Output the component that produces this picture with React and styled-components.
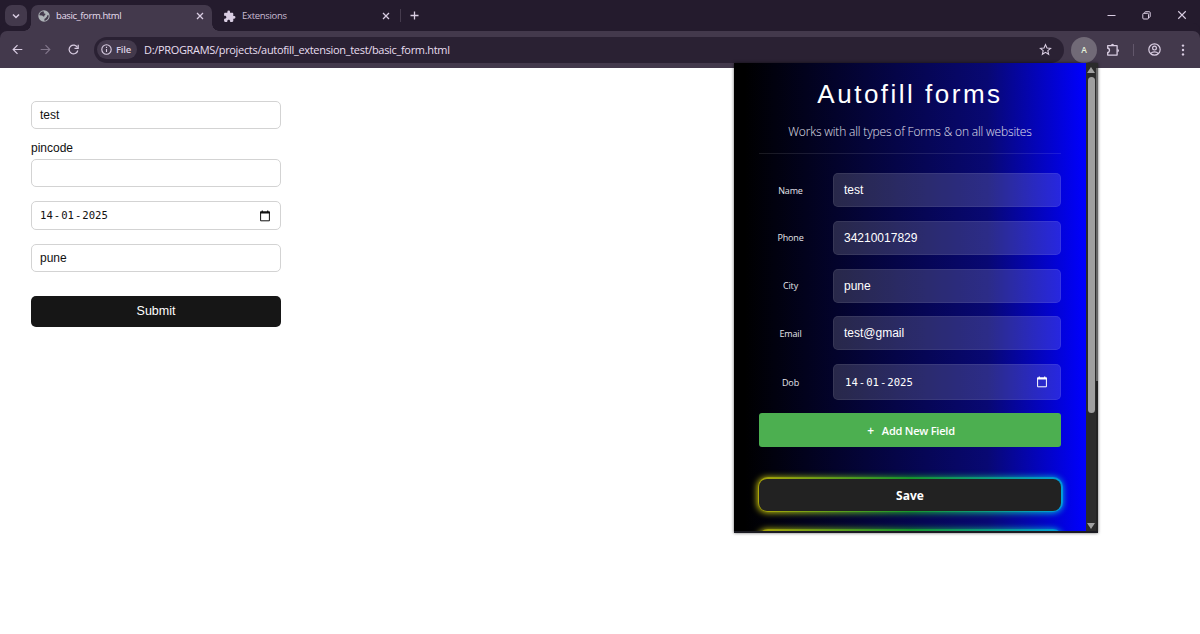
import styled, {createGlobalStyle} from 'styled-components';

const formFields = [
  {id: 'name', value: 'test', height: 28, gap: 11},
  {id: 'pincode', label: 'pincode', value: '', height: 28, gap: 14},
  {id: 'dob', date: ['14', '01', '2025'], height: 29, gap: 14},
  {id: 'city', value: 'pune', height: 28, gap: 24},
];

const popupFields = [
  {label: 'Name', value: 'test'},
  {label: 'Phone', value: '34210017829'},
  {label: 'City', value: 'pune'},
  {label: 'Email', value: 'test@gmail'},
  {label: 'Dob', date: ['14', '01', '2025']},
];

const Icon = ({size = 12, box = 24, stroke = 2, fill = 'none', children}) => (
  <svg
    width={size}
    height={size}
    viewBox={`0 0 ${box} ${box}`}
    fill={fill}
    stroke={fill === 'none' ? 'currentColor' : 'none'}
    strokeWidth={stroke}
  >
    {children}
  </svg>
);

const CloseIcon = ({size = 8, stroke = 1.3}) => (
  <Icon size={size} box={8} stroke={stroke}>
    <path d="M1 1l6 6M7 1L1 7" />
  </Icon>
);

const GlobeIcon = () => (
  <Icon size={12} box={12} fill="#aeb3b8">
    <circle cx="6" cy="6" r="5.7" />
    <path
      fill="#43394c"
      d="M5.2 1.3C3 1.6 1.5 3.3 1.3 5.3l2.7.1c1 .1 1 1.2 1.8 1.2 1 0 .3-1.5 1.3-1.9 1-.3.4-1.2-.5-1.1-1 .1-1.3-1.1-.3-1.3zM10.7 5.4c-.8-.5-1.9.1-1.7.8.2.8-.9.9-1.1 1.6-.2.8-1.5.7-1.5 1.6v1.300c2.400-.2 4.400-2.300 4.300-5.300z"
    />
  </Icon>
);

const PuzzleFilledIcon = () => (
  <Icon size={13} box={24} fill="#d9cde2">
    <path d="M20.5 11H19V7c0-1.1-.9-2-2-2h-4V3.500a2.500 2.500 0 0 0-5 0V5H4c-1.100 0-1.990.9-1.990 2v3.800H3.500c1.490 0 2.700 1.210 2.700 2.700s-1.210 2.700-2.700 2.700H2V20c0 1.100.9 2 2 2h3.800v-1.500c0-1.490 1.210-2.700 2.700-2.700s2.700 1.210 2.700 2.700V22H17c1.100 0 2-.9 2-2v-4h1.500a2.500 2.500 0 0 0 0-5z" />
  </Icon>
);

const PuzzleIcon = () => (
  <Icon size={14} box={14} stroke={1.3}>
    <path d="M1.700 5V2.700h9.400v9.400H1.700V9.700M1.100 9.700c3.200 0 3.200-4.700 0-4.700" strokeLinejoin="round" />
    <path d="M5 2.300a1.500 1.500 0 0 1 3 0zM11.500 5.900a1.500 1.500 0 0 1 0 3z" fill="currentColor" stroke="none" />
  </Icon>
);

const CalendarIcon = () => (
  <Icon size={12} box={12} stroke={1}>
    <path d="M1.600 2h8.800v8.800H1.600z" />
    <path d="M1.100 1.500h9.800v1.900H1.100zM2.700.6h1.200v1.400H2.700zM8.100.6h1.200v1.400H8.100z" fill="currentColor" stroke="none" />
  </Icon>
);

const DateValue = ({parts}) => (
  <>
    <StyledDate>
      {parts[0]}
      <i>-</i>
      {parts[1]}
      <i>-</i>
      {parts[2]}
    </StyledDate>
    <CalendarIcon />
  </>
);

const TabBar = () => (
  <StyledTabBar>
    <StyledTabSearch>
      <Icon size={8} box={8} stroke={1.5}>
        <path d="M1 2.500l3 3 3-3" />
      </Icon>
    </StyledTabSearch>
    <StyledTab $active>
      <GlobeIcon />
      <StyledTabTitle $active>basic_form.html</StyledTabTitle>
      <CloseIcon />
    </StyledTab>
    <StyledTab>
      <PuzzleFilledIcon />
      <StyledTabTitle>Extensions</StyledTabTitle>
      <CloseIcon />
    </StyledTab>
    <StyledNewTab>
      <Icon size={9} box={9} stroke={1.3}>
        <path d="M4.500 .5v8M.5 4.500h8" />
      </Icon>
    </StyledNewTab>
    <StyledWindowButtons>
      <Icon size={9} box={9} stroke={1}>
        <path d="M.5 4.500h8" />
      </Icon>
      <Icon size={9} box={9} stroke={1}>
        <rect x=".8" y="2.300" width="5.700" height="5.700" rx="1" />
        <path d="M2.700 2.200V1.500q0-.8.8-.8h3.700q1 0 1 1v3.800q0 .8-.9.8h-.7" />
      </Icon>
      <CloseIcon size={10} stroke={0.9} />
    </StyledWindowButtons>
  </StyledTabBar>
);

const Toolbar = () => (
  <StyledToolbar>
    <StyledNavButtons>
      <Icon size={11} box={11} stroke={1.2}>
        <path d="M10.300 5.500H1.300M5.500 1.200L1.200 5.500l4.300 4.300" />
      </Icon>
      <StyledDisabled>
        <Icon size={11} box={11} stroke={1.2}>
          <path d="M.7 5.500h9M5.500 1.200l4.300 4.300-4.300 4.300" />
        </Icon>
      </StyledDisabled>
      <Icon size={11} box={11} stroke={1.2}>
        <path d="M9.500 3.600A4.400 4.400 0 1 0 9.800 6.500" />
        <path d="M10.200 .7v3.700H6.500" />
      </Icon>
    </StyledNavButtons>
    <StyledOmnibox>
      <StyledFileChip>
        <Icon size={11} box={11} stroke={1.1}>
          <circle cx="5.500" cy="5.500" r="4.700" />
          <path d="M5.500 4.900v3.200M5.500 2.800v1.200" />
        </Icon>
        File
      </StyledFileChip>
      <StyledUrl>D:/PROGRAMS/projects/autofill_extension_test/basic_form.html</StyledUrl>
      <Icon size={13} box={24} stroke={2}>
        <path d="M12 3l2.700 6.200 6.700.6-5.100 4.400 1.500 6.600L12 17.300l-5.800 3.500 1.500-6.600-5.100-4.400 6.700-.6z" />
      </Icon>
    </StyledOmnibox>
    <StyledExtensionBadge>A</StyledExtensionBadge>
    <PuzzleIcon />
    <StyledDivider />
    <StyledProfile>
      <Icon size={13} box={13} stroke={1.2}>
        <circle cx="6.500" cy="6.500" r="5.700" />
        <circle cx="6.500" cy="5.100" r="1.900" />
        <path d="M2.700 10.500c1.800-2.300 5.800-2.300 7.600 0" />
      </Icon>
    </StyledProfile>
    <Icon size={12} box={12} fill="#d9cde2">
      <circle cx="6" cy="1.600" r="1.200" />
      <circle cx="6" cy="6" r="1.200" />
      <circle cx="6" cy="10.400" r="1.200" />
    </Icon>
  </StyledToolbar>
);

const PageForm = () => (
  <StyledForm>
    {formFields.map(field => (
      <StyledFormRow key={field.id} $gap={field.gap}>
        {field.label ? <StyledFormLabel>{field.label}</StyledFormLabel> : ''}
        <StyledFormInput $height={field.height}>
          {field.date ? <DateValue parts={field.date} /> : field.value}
        </StyledFormInput>
      </StyledFormRow>
    ))}
    <StyledSubmit>Submit</StyledSubmit>
  </StyledForm>
);

const Popup = () => (
  <StyledPopup>
    <StyledPopupBody>
      <StyledTitle>Autofill forms</StyledTitle>
      <StyledSubtitle>Works with all types of Forms &amp; on all websites</StyledSubtitle>
      <StyledFieldList>
        {popupFields.map(field => (
          <StyledFieldRow key={field.label}>
            <StyledFieldLabel>{field.label}</StyledFieldLabel>
            <StyledFieldInput $date={!!field.date}>
              {field.date ? <DateValue parts={field.date} /> : field.value}
            </StyledFieldInput>
          </StyledFieldRow>
        ))}
      </StyledFieldList>
      <StyledAddField>
        <span>+</span>Add New Field
      </StyledAddField>
      <StyledGlowButton>
        <span>Save</span>
      </StyledGlowButton>
      <StyledGlowButton />
    </StyledPopupBody>
    <StyledScrollbar>
      <StyledArrow />
      <StyledThumb />
      <StyledArrow $down />
    </StyledScrollbar>
    <StyledOuterScroll />
  </StyledPopup>
);

export default function App() {
  return (
    <StyledWindow>
      <GlobalStyle />
      <TabBar />
      <Toolbar />
      <PageForm />
      <Popup />
    </StyledWindow>
  );
}

const GlobalStyle = createGlobalStyle`
  * {
    box-sizing: border-box;
  }

  body {
    margin: 0;
    background: #fff;
    overflow: hidden;
  }

  svg {
    display: block;
    flex-shrink: 0;
  }
`;

const StyledWindow = styled.div`
  position: relative;
  height: 634px;
  overflow: hidden;
  background-color: #fff;
  font-family: 'Open Sans', 'Noto Sans', sans-serif;
`;

const StyledTabBar = styled.header`
  display: flex;
  height: 31px;
  background-color: #241b2d;
  color: #d9cde2;
`;

const StyledTabSearch = styled.div`
  display: flex;
  align-items: center;
  justify-content: center;
  width: 22px;
  height: 21px;
  margin: 5px 4px 0 5px;
  border-radius: 7px;
  background-color: #43394c;
`;

const StyledTab = styled.div`
  position: relative;
  display: flex;
  align-items: center;
  width: ${props => (props.$active ? '181px' : '188px')};
  height: ${props => (props.$active ? '27px' : '22px')};
  margin-top: 5px;
  padding: ${props => (props.$active ? '0 8px 5px 7px' : '0 10px 0 11px')};
  border-radius: 7px 7px 0 0;
  background-color: ${props => (props.$active ? '#43394c' : 'transparent')};
  ${props =>
    props.$active
      ? `
    &::before,
    &::after {
      content: '';
      position: absolute;
      bottom: 1px;
      width: 7px;
      height: 7px;
    }
    &::before {
      left: -7px;
      background: radial-gradient(circle at 0 0, transparent 6.5px, #43394c 7px);
    }
    &::after {
      right: -7px;
      background: radial-gradient(circle at 100% 0, transparent 6.5px, #43394c 7px);
    }`
      : ''}
`;

const StyledTabTitle = styled.span`
  flex: 1;
  margin-left: 6px;
  color: ${props => (props.$active ? '#e8dff0' : '#c9bcd3')};
  font-size: 9.5px;
  line-height: 14px;
  letter-spacing: ${props => (props.$active ? '-0.4px' : '-0.3px')};
`;

const StyledNewTab = styled.div`
  display: flex;
  align-items: center;
  height: 13px;
  margin-top: 9px;
  padding-left: 9px;
  border-left: 1px solid #453b4d;
`;

const StyledWindowButtons = styled.div`
  display: flex;
  align-items: center;
  gap: 26px;
  height: 30px;
  margin-left: auto;
  padding-right: 13px;
`;

const StyledToolbar = styled.nav`
  display: flex;
  align-items: center;
  height: 37px;
  padding: 0 11px 0 12px;
  border-radius: 7px 7px 0 0;
  background-color: #43394c;
  box-shadow: 0 -8px 0 #241b2d;
  color: #d9cde2;
`;

const StyledNavButtons = styled.div`
  display: flex;
  gap: 17px;
  width: 82px;
`;

const StyledDisabled = styled.span`
  color: #81768a;
`;

const StyledOmnibox = styled.div`
  display: flex;
  align-items: center;
  width: 970px;
  height: 26px;
  padding: 0 12px 0 3px;
  border-radius: 13px;
  background-color: #2a2133;
`;

const StyledFileChip = styled.div`
  display: flex;
  align-items: center;
  gap: 4px;
  width: 40px;
  height: 19px;
  padding-left: 4px;
  border-radius: 10px;
  background-color: #43394c;
  font-size: 9.5px;
  font-weight: 600;
  letter-spacing: -0.2px;
`;

const StyledUrl = styled.span`
  flex: 1;
  margin-left: 7px;
  color: #e8dff0;
  font-size: 11px;
  letter-spacing: -0.32px;
`;

const StyledExtensionBadge = styled.div`
  display: flex;
  align-items: center;
  justify-content: center;
  width: 26px;
  height: 26px;
  margin: 0 9px 0 7px;
  border-radius: 50%;
  background-color: #716a77;
  color: #e6f3dc;
  font-size: 8.5px;
  font-weight: 600;
`;

const StyledDivider = styled.div`
  width: 1px;
  height: 12px;
  margin: 0 14px 0 13px;
  background-color: #62576b;
`;

const StyledProfile = styled.div`
  margin-right: 16px;
`;

const StyledForm = styled.form`
  width: 250px;
  margin: 33px 0 0 31px;
  color: #111;
  font-family: 'Liberation Sans', Arial, sans-serif;
  font-size: 12px;
`;

const StyledFormRow = styled.div`
  margin-bottom: ${props => props.$gap}px;
`;

const StyledFormLabel = styled.label`
  display: block;
  height: 19px;
  line-height: 16px;
`;

const StyledFormInput = styled.div`
  display: flex;
  align-items: center;
  justify-content: space-between;
  height: ${props => props.$height}px;
  padding: 0 9px 0 8px;
  border: 1px solid #d3d3d3;
  border-radius: 5px;
`;

const StyledSubmit = styled.div`
  height: 31px;
  border-radius: 5px;
  background-color: #161616;
  color: #fff;
  font-size: 12.5px;
  line-height: 30px;
  text-align: center;
`;

const StyledDate = styled.span`
  padding-bottom: 1px;
  font-family: 'DejaVu Sans Mono', monospace;
  font-size: 10.6px;

  i {
    margin: 0 1px;
    font-style: normal;
  }
`;

const StyledPopup = styled.aside`
  position: absolute;
  top: 63px;
  left: 734px;
  display: flex;
  width: 364px;
  height: 470px;
  border-bottom: 2px solid #1b1b22;
  background-color: #2b2b2b;
  box-shadow: 0 0 3px rgba(0, 0, 0, 0.6);
`;

const StyledPopupBody = styled.div`
  width: 352px;
  padding: 15px 25px 0;
  overflow: hidden;
  background: linear-gradient(90deg, #000 3%, #080873 72%, #00f 100%);
  color: #fff;
`;

const StyledTitle = styled.h1`
  height: 32px;
  margin: 0;
  font-family: 'Liberation Sans', Arial, sans-serif;
  font-size: 26px;
  font-weight: 400;
  line-height: 32px;
  letter-spacing: 2.5px;
  text-align: center;
  white-space: nowrap;
`;

const StyledSubtitle = styled.p`
  height: 44px;
  margin: 0;
  padding-top: 13px;
  border-bottom: 1px solid rgba(255, 255, 255, 0.1);
  color: #e0e0ee;
  font-size: 12px;
  font-weight: 300;
  line-height: 17px;
  letter-spacing: -0.16px;
  text-align: center;
  white-space: nowrap;
`;

const StyledFieldList = styled.div`
  display: flex;
  flex-direction: column;
  gap: 13.8px;
  padding-top: 19px;
`;

const StyledFieldRow = styled.div`
  display: flex;
  align-items: center;
`;

const StyledFieldLabel = styled.span`
  width: 63px;
  margin-right: 11px;
  color: #e4e4ea;
  font-size: 9px;
  letter-spacing: -0.15px;
  text-align: center;
`;

const StyledFieldInput = styled.div`
  display: flex;
  align-items: center;
  justify-content: space-between;
  width: 228px;
  height: ${props => (props.$date ? 36 : 34)}px;
  padding: 0 12px 0 ${props => (props.$date ? 11 : 10)}px;
  border: 1px solid rgba(255, 255, 255, 0.07);
  border-radius: 5px;
  background-color: rgba(255, 255, 255, 0.15);
  font-family: 'Liberation Sans', Arial, sans-serif;
  font-size: 12px;
`;

const StyledAddField = styled.div`
  height: 34px;
  margin: 13.3px 0 31.5px;
  border-radius: 3px;
  background-color: #4caf50;
  font-size: 11px;
  font-weight: 600;
  line-height: 35px;
  letter-spacing: -0.22px;
  text-align: center;
  text-indent: 2px;

  span {
    margin-right: 8px;
    font-size: 12px;
  }
`;

const StyledGlowButton = styled.div`
  position: relative;
  z-index: 0;
  display: flex;
  height: 32px;
  margin-bottom: 20px;

  &::before,
  &::after {
    content: '';
    position: absolute;
    inset: -2px;
    z-index: -1;
    border-radius: 10px;
    background: linear-gradient(90deg, #c4bc0a, #1aab28 50%, #00b4dc);
    filter: blur(3px);
  }

  &::after {
    inset: -1.5px;
    opacity: 0.65;
    filter: blur(0.7px);
  }

  span {
    flex: 1;
    border-radius: 8px;
    background-color: #222;
    font-size: 12px;
    font-weight: 700;
    line-height: 34px;
    text-align: center;
  }
`;

const StyledScrollbar = styled.div`
  display: flex;
  flex-direction: column;
  align-items: center;
  width: 10px;
  padding: 4px 0 2px;
`;

const StyledArrow = styled.span`
  border: 4px solid transparent;
  border-top: ${props => (props.$down ? '6px solid #a0a0a0' : '0')};
  border-bottom: ${props => (props.$down ? '0' : '6px solid #a0a0a0')};
  margin-top: ${props => (props.$down ? 'auto' : '0')};
`;

const StyledThumb = styled.div`
  width: 7px;
  height: 336px;
  margin-top: 4px;
  border-radius: 4px;
  background-color: #9f9f9f;
`;

const StyledOuterScroll = styled.div`
  width: 2px;
  background: linear-gradient(#2b2b2b 5px, #666 5px, #666 318px, #222 318px);
`;
